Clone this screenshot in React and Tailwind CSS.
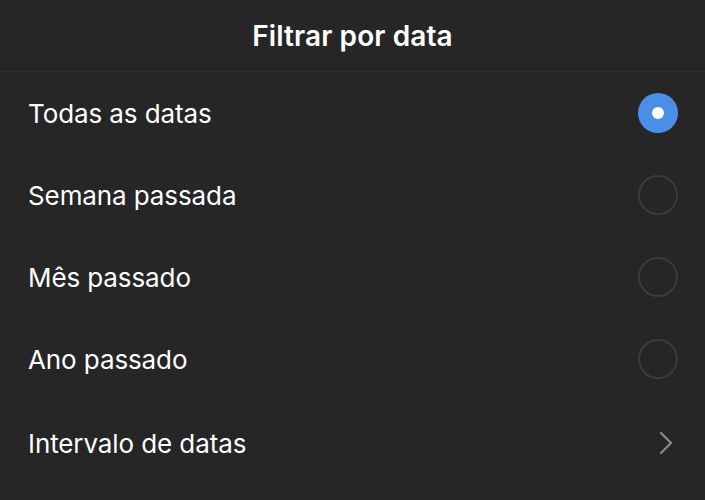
import { useState } from 'react';

const options = [
  { id: 'all', label: 'Todas as datas' },
  { id: 'week', label: 'Semana passada' },
  { id: 'month', label: 'Mês passado' },
  { id: 'year', label: 'Ano passado' },
];

function Radio({ checked }) {
  if (checked) {
    return (
      <div className="w-10 h-10 rounded-full bg-[#4a8ee6] flex items-center justify-center">
        <div className="w-3 h-3 rounded-full bg-white" />
      </div>
    );
  }
  return <div className="w-10 h-10 rounded-full border-2 border-[#3b3b3b]" />;
}

export default function App() {
  const [selected, setSelected] = useState('all');

  return (
    <div className="w-[705px] h-[500px] bg-[#262626] text-white overflow-hidden font-['Inter',sans-serif]">
      <div className="h-[72px] flex items-center justify-center border-b border-[#2f2f2f]">
        <h1 className="text-[28px] font-semibold tracking-[0.1px]">Filtrar por data</h1>
      </div>

      {options.map(o => (
        <button
          key={o.id}
          onClick={() => setSelected(o.id)}
          className="w-full h-[82px] flex items-center justify-between pl-7 pr-[27px] text-left"
        >
          <span className="text-[26px] tracking-[-0.1px]">{o.label}</span>
          <Radio checked={selected === o.id} />
        </button>
      ))}

      <button className="w-full h-[86px] flex items-center justify-between pl-7 pr-[32px] text-left">
        <span className="text-[26px] tracking-[-0.1px]">Intervalo de datas</span>
        <svg width="14" height="24" viewBox="0 0 14 24" fill="none" stroke="#8a8a8a" strokeWidth="2.2" strokeLinecap="round" strokeLinejoin="round">
          <path d="M2 2l10 10-10 10" />
        </svg>
      </button>
    </div>
  );
}
